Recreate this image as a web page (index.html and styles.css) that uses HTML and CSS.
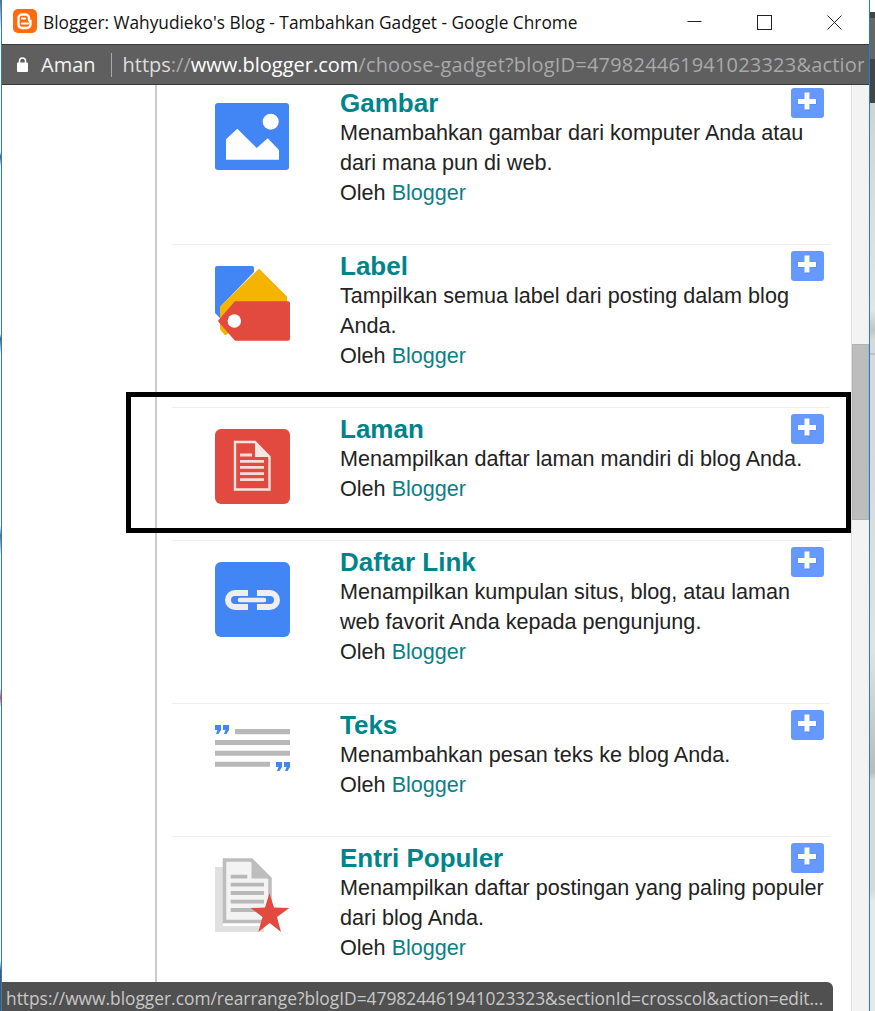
FILE: index.html
```html
<!DOCTYPE html>
<html>
<head>
    <meta charset="utf-8">
    <title>Blogger: Wahyudieko's Blog - Tambahkan Gadget</title>
    <link rel="stylesheet" href="styles.css">
</head>
<body>
<div class="desktop">
    <div class="edge-left"></div>
    <div class="window">
        <div class="titlebar">
            <svg class="favicon" width="24" height="24" viewBox="0 0 24 24">
                <rect width="24" height="24" rx="5" fill="#ff6a0c"/>
                <path d="M9 5.500h3.500a3.500 3.500 0 0 1 3.500 3.500v1.500a1.500 1.500 0 0 0 1.500 1.500v3.500a3.500 3.500 0 0 1-3.500 3.500H9A3.500 3.500 0 0 1 5.500 15V9A3.500 3.500 0 0 1 9 5.500z" fill="none" stroke="#fff" stroke-width="2.400"/>
                <path d="M9 9.500h3M9 14.500h6" stroke="#fff" stroke-width="2.200" stroke-linecap="round"/>
            </svg>
            <span class="window-title">Blogger: Wahyudieko's Blog - Tambahkan Gadget - Google Chrome</span>
            <div class="controls">
                <div class="control"><svg width="15" height="15" viewBox="0 0 15 15"><path d="M0.500 6.500h14" stroke="#222" fill="none"/></svg></div>
                <div class="control"><svg width="15" height="15" viewBox="0 0 15 15"><rect x="0.500" y="0.500" width="14" height="14" stroke="#222" fill="none"/></svg></div>
                <div class="control"><svg width="15" height="15" viewBox="0 0 15 15"><path d="M0.500 0.500l14 14M14.500 0.500l-14 14" stroke="#222" fill="none"/></svg></div>
            </div>
        </div>
        <div class="addressbar">
            <svg class="lock" width="11" height="15" viewBox="0 0 11 15">
                <path d="M2.500 6V4a3 3 0 0 1 6 0v2" fill="none" stroke="#fff" stroke-width="1.500"/>
                <rect y="5.500" width="11" height="9.500" rx="1" fill="#fff"/>
            </svg>
            <span class="secure">Aman</span>
            <span class="divider"></span>
            <div class="url"><span class="url-soft">https</span><span class="url-dim">://</span><span class="url-host">www.blogger.com</span><span class="url-dim url-path">/choose-gadget?blogID=479824461941023323&amp;action=editWidget&amp;sectionId=crosscol</span></div>
        </div>
        <div class="view">
            <div class="sidebar"></div>
            <div class="gadgets">
                <div class="gadget">
                    <div class="gadget-icon">
                        <svg width="75" height="75" viewBox="0 0 75 75">
                            <rect width="74" height="67" rx="3" fill="#4285f4"/>
                            <circle cx="55.700" cy="18.700" r="8" fill="#fff"/>
                            <path d="M11 36.300L22.300 25.700 41.700 45 52.700 35.300 64 47V56.700H11z" fill="#fff"/>
                        </svg>
                    </div>
                    <div class="gadget-info">
                        <div class="add-btn"><svg width="33" height="30" viewBox="0 0 33 30"><path d="M16.500 5.500v17M7.500 14h18" stroke="#3f6fd0" stroke-width="5" opacity=".5"/><path d="M16 4.500v17M7 13.500h18" stroke="#fff" stroke-width="5"/></svg></div>
                        <h3 class="gadget-name">Gambar</h3>
                        <p class="gadget-desc">Menambahkan gambar dari komputer Anda atau dari mana pun di web.</p>
                        <p class="gadget-by">Oleh <a href="#">Blogger</a></p>
                    </div>
                </div>
                <div class="gadget">
                    <div class="gadget-icon">
                        <svg width="75" height="75" viewBox="0 0 75 75">
                            <path d="M2 0H37a2 2 0 0 1 2 2V6L6 40V53L0 47V2a2 2 0 0 1 2-2z" fill="#4285f4"/>
                            <path d="M44 4L71 31 71 38 10 68 6 63V41z" fill="#f4b400" stroke="#f4b400" stroke-width="2" stroke-linejoin="round"/>
                            <path d="M20 35.300H73a2 2 0 0 1 2 2V72.700a2 2 0 0 1-2 2H20L4 56.500a2 2 0 0 1 0-3z" fill="#e2493f"/>
                            <circle cx="19.300" cy="55" r="6.700" fill="#fff"/>
                        </svg>
                    </div>
                    <div class="gadget-info">
                        <div class="add-btn"><svg width="33" height="30" viewBox="0 0 33 30"><path d="M16.500 5.500v17M7.500 14h18" stroke="#3f6fd0" stroke-width="5" opacity=".5"/><path d="M16 4.500v17M7 13.500h18" stroke="#fff" stroke-width="5"/></svg></div>
                        <h3 class="gadget-name">Label</h3>
                        <p class="gadget-desc">Tampilkan semua label dari posting dalam blog Anda.</p>
                        <p class="gadget-by">Oleh <a href="#">Blogger</a></p>
                    </div>
                </div>
                <div class="gadget">
                    <div class="gadget-icon">
                        <svg width="75" height="75" viewBox="0 0 75 75">
                            <rect width="75" height="75" rx="6" fill="#e2493f"/>
                            <path d="M40 13L55 28H40z" fill="#f5e6e4"/>
                            <path d="M20 13H40L54.500 28V60.500H20z" fill="none" stroke="#f5e6e4" stroke-width="2.400"/>
                            <path d="M25 26H37M25 32.300H49M25 38.300H49M25 44.700H49M25 50.700H49" stroke="#f5dcda" stroke-width="2.800"/>
                        </svg>
                    </div>
                    <div class="gadget-info">
                        <div class="add-btn"><svg width="33" height="30" viewBox="0 0 33 30"><path d="M16.500 5.500v17M7.500 14h18" stroke="#3f6fd0" stroke-width="5" opacity=".5"/><path d="M16 4.500v17M7 13.500h18" stroke="#fff" stroke-width="5"/></svg></div>
                        <h3 class="gadget-name">Laman</h3>
                        <p class="gadget-desc">Menampilkan daftar laman mandiri di blog Anda.</p>
                        <p class="gadget-by">Oleh <a href="#">Blogger</a></p>
                    </div>
                </div>
                <div class="gadget">
                    <div class="gadget-icon">
                        <svg width="75" height="75" viewBox="0 0 75 75">
                            <rect width="75" height="75" rx="6" fill="#4285f4"/>
                            <path d="M33 31H20a7 7 0 0 0 0 14H33M42 31H55a7 7 0 0 1 0 14H42" fill="none" stroke="#eee" stroke-width="6"/>
                            <path d="M25 38H49" stroke="#eee" stroke-width="4.500" stroke-linecap="round"/>
                        </svg>
                    </div>
                    <div class="gadget-info">
                        <div class="add-btn"><svg width="33" height="30" viewBox="0 0 33 30"><path d="M16.500 5.500v17M7.500 14h18" stroke="#3f6fd0" stroke-width="5" opacity=".5"/><path d="M16 4.500v17M7 13.500h18" stroke="#fff" stroke-width="5"/></svg></div>
                        <h3 class="gadget-name">Daftar Link</h3>
                        <p class="gadget-desc">Menampilkan kumpulan situs, blog, atau laman web favorit Anda kepada pengunjung.</p>
                        <p class="gadget-by">Oleh <a href="#">Blogger</a></p>
                    </div>
                </div>
                <div class="gadget">
                    <div class="gadget-icon">
                        <svg width="75" height="75" viewBox="0 0 75 75">
                            <path d="M20 4H75V9.300H20zM0 15H75V20H0zM0 25.700H75V30.700H0zM0 36.700H55V41.700H0z" fill="#b8b8b8"/>
                            <path d="M0 0H6V5L3.500 9H1L2.500 5H0zM8 0H14V5L11.500 9H9L10.500 5H8z" fill="#4285f4"/>
                            <path d="M61 37H67V42L64.500 46H62L63.500 42H61zM69 37H75V42L72.500 46H70L71.500 42H69z" fill="#4285f4"/>
                        </svg>
                    </div>
                    <div class="gadget-info">
                        <div class="add-btn"><svg width="33" height="30" viewBox="0 0 33 30"><path d="M16.500 5.500v17M7.500 14h18" stroke="#3f6fd0" stroke-width="5" opacity=".5"/><path d="M16 4.500v17M7 13.500h18" stroke="#fff" stroke-width="5"/></svg></div>
                        <h3 class="gadget-name">Teks</h3>
                        <p class="gadget-desc">Menambahkan pesan teks ke blog Anda.</p>
                        <p class="gadget-by">Oleh <a href="#">Blogger</a></p>
                    </div>
                </div>
                <div class="gadget">
                    <div class="gadget-icon">
                        <svg width="75" height="75" viewBox="0 0 75 75">
                            <path d="M0 9H8V68H49V74H0z" fill="#e0e0e0"/>
                            <path d="M9.500 2H36.500L55 20.500V63.500H9.500z" fill="#f3f3f3" stroke="#bdbdbd" stroke-width="3.500"/>
                            <path d="M36.500 1L56.700 20.500H36.500z" fill="#bdbdbd"/>
                            <path d="M15.700 18.700H32.300M15.700 26.700H49M15.700 35H49M15.700 43.700H49M15.700 52H49" stroke="#b8b8b8" stroke-width="3.800"/>
                            <path d="M54.500 35.300L59 49.500 74.300 50 62 59 66 74 54.700 65 43.300 74 47.500 59 35.700 50 50 49.500z" fill="#e2493f"/>
                        </svg>
                    </div>
                    <div class="gadget-info">
                        <div class="add-btn"><svg width="33" height="30" viewBox="0 0 33 30"><path d="M16.500 5.500v17M7.500 14h18" stroke="#3f6fd0" stroke-width="5" opacity=".5"/><path d="M16 4.500v17M7 13.500h18" stroke="#fff" stroke-width="5"/></svg></div>
                        <h3 class="gadget-name">Entri Populer</h3>
                        <p class="gadget-desc">Menampilkan daftar postingan yang paling populer dari blog Anda.</p>
                        <p class="gadget-by">Oleh <a href="#">Blogger</a></p>
                    </div>
                </div>
            </div>
            <div class="scrollbar"><div class="thumb"></div></div>
        </div>
    </div>
    <div class="edge-right"></div>
    <div class="highlight"></div>
    <div class="status">https://www.blogger.com/rearrange?blogID=479824461941023323&amp;sectionId=crosscol&amp;action=edit...</div>
</div>
</body>
</html>
```

FILE: styles.css
```css
html, body {
    margin: 0;
    padding: 0;
    background: #fff;
}

.desktop {
    position: relative;
    display: flex;
    width: 875px;
    height: 1011px;
    overflow: hidden;
    font-family: "Liberation Sans", Arial, sans-serif;
}

.edge-left {
    width: 1px;
    background: linear-gradient(#666 0, #fff 3%, #fff 15%, #555 15.5%, #fff 16.5%, #fff 33%, #555 33.500%, #fff 35%, #fff 52%, #666 53%, #fff 55%, #fff 68%, #e0513f 69%, #fff 70%, #fff 95%, #555 96%);
}

.edge-right {
    width: 5px;
    background: linear-gradient(#fff 0, #fff 12px, #444 12px, #444 18px, #666 18px, #666 59px, #444 59px, #444 103px, #d2d2d2 103px, #dcdcdc 200px, #e4e4e4 310px, #c4c4c4 330px, #d8d8d8 340px, #d8d8d8 353px, #aaa 354px, #d8d8d8 355px, #d8d8d8 440px, #e2e2e2 650px, #bbb 772px, #d8d8d8 780px, #d8d8d8 890px, #e8e8e8 900px);
}

.window {
    display: flex;
    flex-direction: column;
    width: 867px;
    flex: none;
    background: #fff;
    border-left: 1px solid #2e7cc4;
    border-right: 1px solid #1a80e0;
}

.titlebar {
    display: flex;
    align-items: center;
    flex: none;
    height: 44px;
    background: #fff;
}

.favicon {
    flex: none;
    margin: -2px 0 0 11px;
}

.window-title {
    margin-left: 6px;
    font-family: "Open Sans", sans-serif;
    font-size: 17.300px;
    color: #111;
    white-space: nowrap;
}

.controls {
    display: flex;
    margin-left: auto;
}

.control {
    display: flex;
    align-items: center;
    justify-content: center;
    width: 70px;
    height: 44px;
}

.addressbar {
    display: flex;
    align-items: center;
    flex: none;
    height: 39px;
    background: #5f5f5f;
    border-top: 1px solid #3a3a3a;
    border-bottom: 1px solid #3a3a3a;
    font-family: "Open Sans", sans-serif;
    font-size: 20px;
}

.lock {
    flex: none;
    margin-left: 15px;
}

.secure {
    margin-left: 13px;
    color: #f2f2f2;
}

.divider {
    flex: none;
    width: 1px;
    height: 24px;
    margin-left: 15px;
    background: #aaa;
}

.url {
    margin-left: 11px;
    width: 741px;
    overflow: hidden;
    white-space: nowrap;
}

.url-soft {
    color: #ddd;
}

.url-dim {
    color: #a9a9a9;
}

.url-path {
    letter-spacing: .2px;
}

.url-host {
    color: #fff;
}

.view {
    display: flex;
    flex: 1;
    min-height: 0;
    overflow: hidden;
}

.sidebar {
    flex: none;
    width: 153px;
}

.gadgets {
    flex: 1;
    min-width: 0;
    margin-top: -4px;
    padding: 0 21px 0 15px;
    border-left: 2px solid #ccc;
}

.gadget {
    display: flex;
    padding: 6px 0 36px;
    border-top: 1px solid #eee;
}

.gadget-icon {
    flex: none;
    width: 125px;
    height: 75px;
    margin-top: 15px;
    padding-left: 43px;
}

.gadget-icon svg {
    display: block;
}

.gadget-info {
    flex: 1;
    min-width: 0;
}

.add-btn {
    float: right;
    width: 33px;
    height: 30px;
    margin-right: 6px;
    background: #6699ff;
    border-radius: 3px;
}

.add-btn svg {
    display: block;
}

.gadget-name {
    margin: 0;
    font-size: 26px;
    font-weight: bold;
    line-height: 30px;
    color: #00848c;
}

.gadget-desc,
.gadget-by {
    margin: 0;
    font-size: 21.600px;
    line-height: 30px;
    color: #222;
}

.gadget-by a {
    color: #0b7f86;
    text-decoration: none;
}

.scrollbar {
    flex: none;
    width: 17px;
    padding-top: 259px;
    background: #f3f3f3;
    border-left: 1px solid #e0e0e0;
    box-sizing: content-box;
}

.thumb {
    height: 174px;
    background: #bdbdbd;
    border: 1px solid #b2b2b2;
    box-sizing: content-box;
    width: 15px;
}

.highlight {
    position: absolute;
    left: 126px;
    top: 392px;
    width: 715px;
    height: 131px;
    border: 5px solid #000;
}

.status {
    position: absolute;
    left: 2px;
    top: 982px;
    width: 827px;
    height: 29px;
    padding-left: 4px;
    background: #505050;
    border-radius: 0 6px 0 0;
    font-family: "Open Sans", sans-serif;
    font-size: 17.350px;
    line-height: 32px;
    color: #c8c8c8;
    white-space: nowrap;
    overflow: hidden;
}
```
